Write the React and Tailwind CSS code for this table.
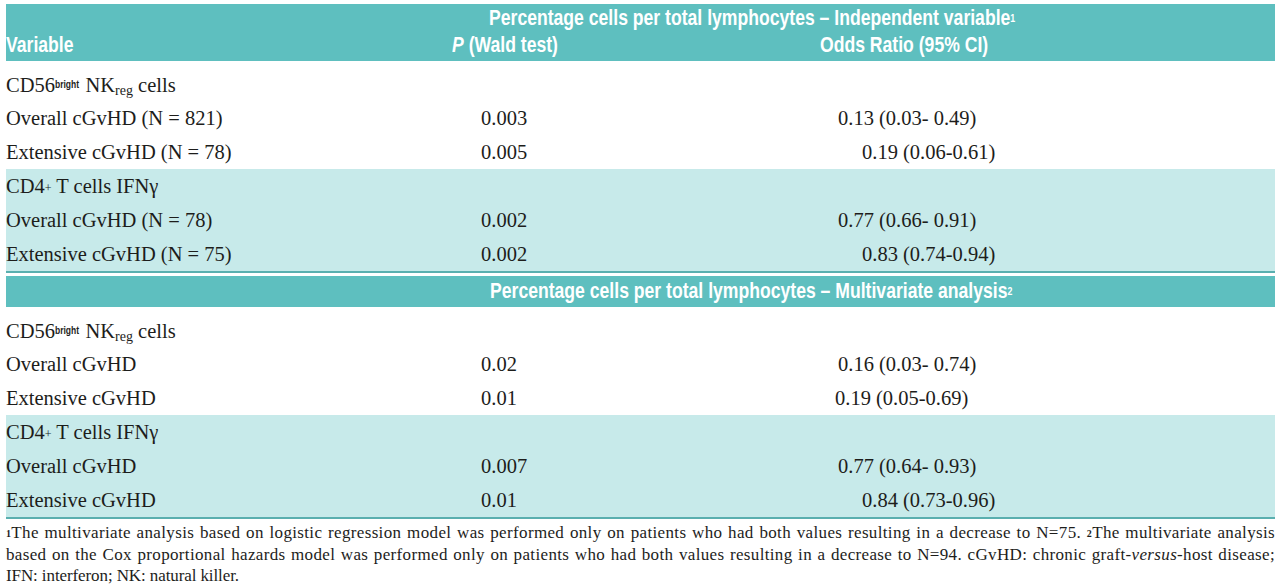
import React from "react";

const HEAD = { fontFamily: '"Liberation Sans", Arial, sans-serif' };
const BODY = { fontFamily: '"Liberation Serif", "Times New Roman", serif' };
const NOTE = { fontFamily: '"Liberation Serif", "Times New Roman", serif' };

function Sq({ children }) {
  return <span className="inline-block origin-left scale-x-[0.8] whitespace-nowrap">{children}</span>;
}

function CD56() {
  return (
    <span>
      CD56
      <sup className="text-[10px] font-bold relative -top-[4px] inline-block origin-left scale-x-[0.85] mr-[-3px]" style={HEAD}>bright</sup>
      {" "}NK<sub className="text-[14px] relative top-[3px]">reg</sub> cells
    </span>
  );
}

function CD4() {
  return (
    <span>
      CD4<sup className="text-[12px] relative -top-[1px]">+</sup> T cells IFNγ
    </span>
  );
}

function Row({ label, p, or, orPad, tall }) {
  return (
    <div className={`flex ${tall ? "h-[40px] pt-[9px] leading-[31px]" : "h-[34px] leading-[34px]"}`}>
      <div className="w-[475px] whitespace-nowrap">{label}</div>
      <div className="w-[354px]">{p}</div>
      <div className={orPad}>{or}</div>
    </div>
  );
}

const sec1a = [
  { label: <CD56 />, tall: true },
  { label: "Overall cGvHD (N = 821)", p: "0.003", or: "0.13 (0.03- 0.49)", orPad: "pl-[3px]" },
  { label: "Extensive cGvHD (N = 78)", p: "0.005", or: "0.19 (0.06-0.61)", orPad: "pl-[27px]" },
];
const sec1b = [
  { label: <CD4 /> },
  { label: "Overall cGvHD (N = 78)", p: "0.002", or: "0.77 (0.66- 0.91)", orPad: "pl-[3px]" },
  { label: "Extensive cGvHD (N = 75)", p: "0.002", or: "0.83 (0.74-0.94)", orPad: "pl-[27px]" },
];
const sec2a = [
  { label: <CD56 />, tall: true },
  { label: "Overall cGvHD", p: "0.02", or: "0.16 (0.03- 0.74)", orPad: "pl-[3px]" },
  { label: "Extensive cGvHD", p: "0.01", or: "0.19 (0.05-0.69)", orPad: "pl-[0px]" },
];
const sec2b = [
  { label: <CD4 /> },
  { label: "Overall cGvHD", p: "0.007", or: "0.77 (0.64- 0.93)", orPad: "pl-[3px]" },
  { label: "Extensive cGvHD", p: "0.01", or: "0.84 (0.73-0.96)", orPad: "pl-[27px]" },
];

export default function App() {
  return (
    <div className="w-[1280px] h-[586px] bg-white overflow-hidden pt-[4px] pl-[6px] pr-[5px] text-[#1d1d1b]">
      {/* Header 1 */}
      <div className="bg-[#5ebfbf] h-[57px] text-white font-bold text-[22px]" style={HEAD}>
        <div className="pl-[483px] leading-[26px] pt-[1px]">
          <Sq>
            Percentage cells per total lymphocytes – Independent variable
            <sup className="text-[11px] relative -top-[3px]">1</sup>
          </Sq>
        </div>
        <div className="flex leading-[27px]">
          <div className="w-[446px]"><Sq>Variable</Sq></div>
          <div className="w-[368px]"><Sq><i>P</i> (Wald test)</Sq></div>
          <div><Sq>Odds Ratio (95% CI)</Sq></div>
        </div>
      </div>

      <div className="text-[20.5px]" style={BODY}>
        <div>
          {sec1a.map((r, i) => <Row key={i} {...r} />)}
        </div>
        <div className="bg-[#c7eaea] border-b-[2px] border-[#5aafaf]">
          {sec1b.map((r, i) => <Row key={i} {...r} />)}
        </div>
      </div>

      {/* Header 2 */}
      <div className="mt-[3px] bg-[#5ebfbf] h-[31px] text-white font-bold text-[22px] leading-[30px] pl-[484px]" style={HEAD}>
        <Sq>
          Percentage cells per total lymphocytes – Multivariate analysis
          <sup className="text-[11px] relative -top-[3px]">2</sup>
        </Sq>
      </div>

      <div className="text-[20.5px]" style={BODY}>
        <div>
          {sec2a.map((r, i) => <Row key={i} {...r} />)}
        </div>
        <div className="bg-[#c7eaea] border-b-[2px] border-[#5aafaf]">
          {sec2b.map((r, i) => <Row key={i} {...r} />)}
        </div>
      </div>

      {/* Footnote */}
      <div className="text-[17px] leading-[21.5px] pt-[3px]" style={NOTE}>
        <div className="text-justify [text-align-last:justify] tracking-[0.35px]">
          <sup className="text-[10px] font-bold relative -top-[1px]">1</sup>The multivariate analysis based on logistic regression model was performed only on patients who had both values resulting in a decrease to N=75. <sup className="text-[10px] font-bold relative -top-[1px]">2</sup>The multivariate analysis
        </div>
        <div className="text-justify [text-align-last:justify] tracking-[0.35px]">
          based on the Cox proportional hazards model was performed only on patients who had both values resulting in a decrease to N=94. cGvHD: chronic graft-<i>versus</i>-host disease;
        </div>
        <div className="tracking-[-0.1px] whitespace-nowrap">IFN: interferon; NK: natural killer.</div>
      </div>
    </div>
  );
}
